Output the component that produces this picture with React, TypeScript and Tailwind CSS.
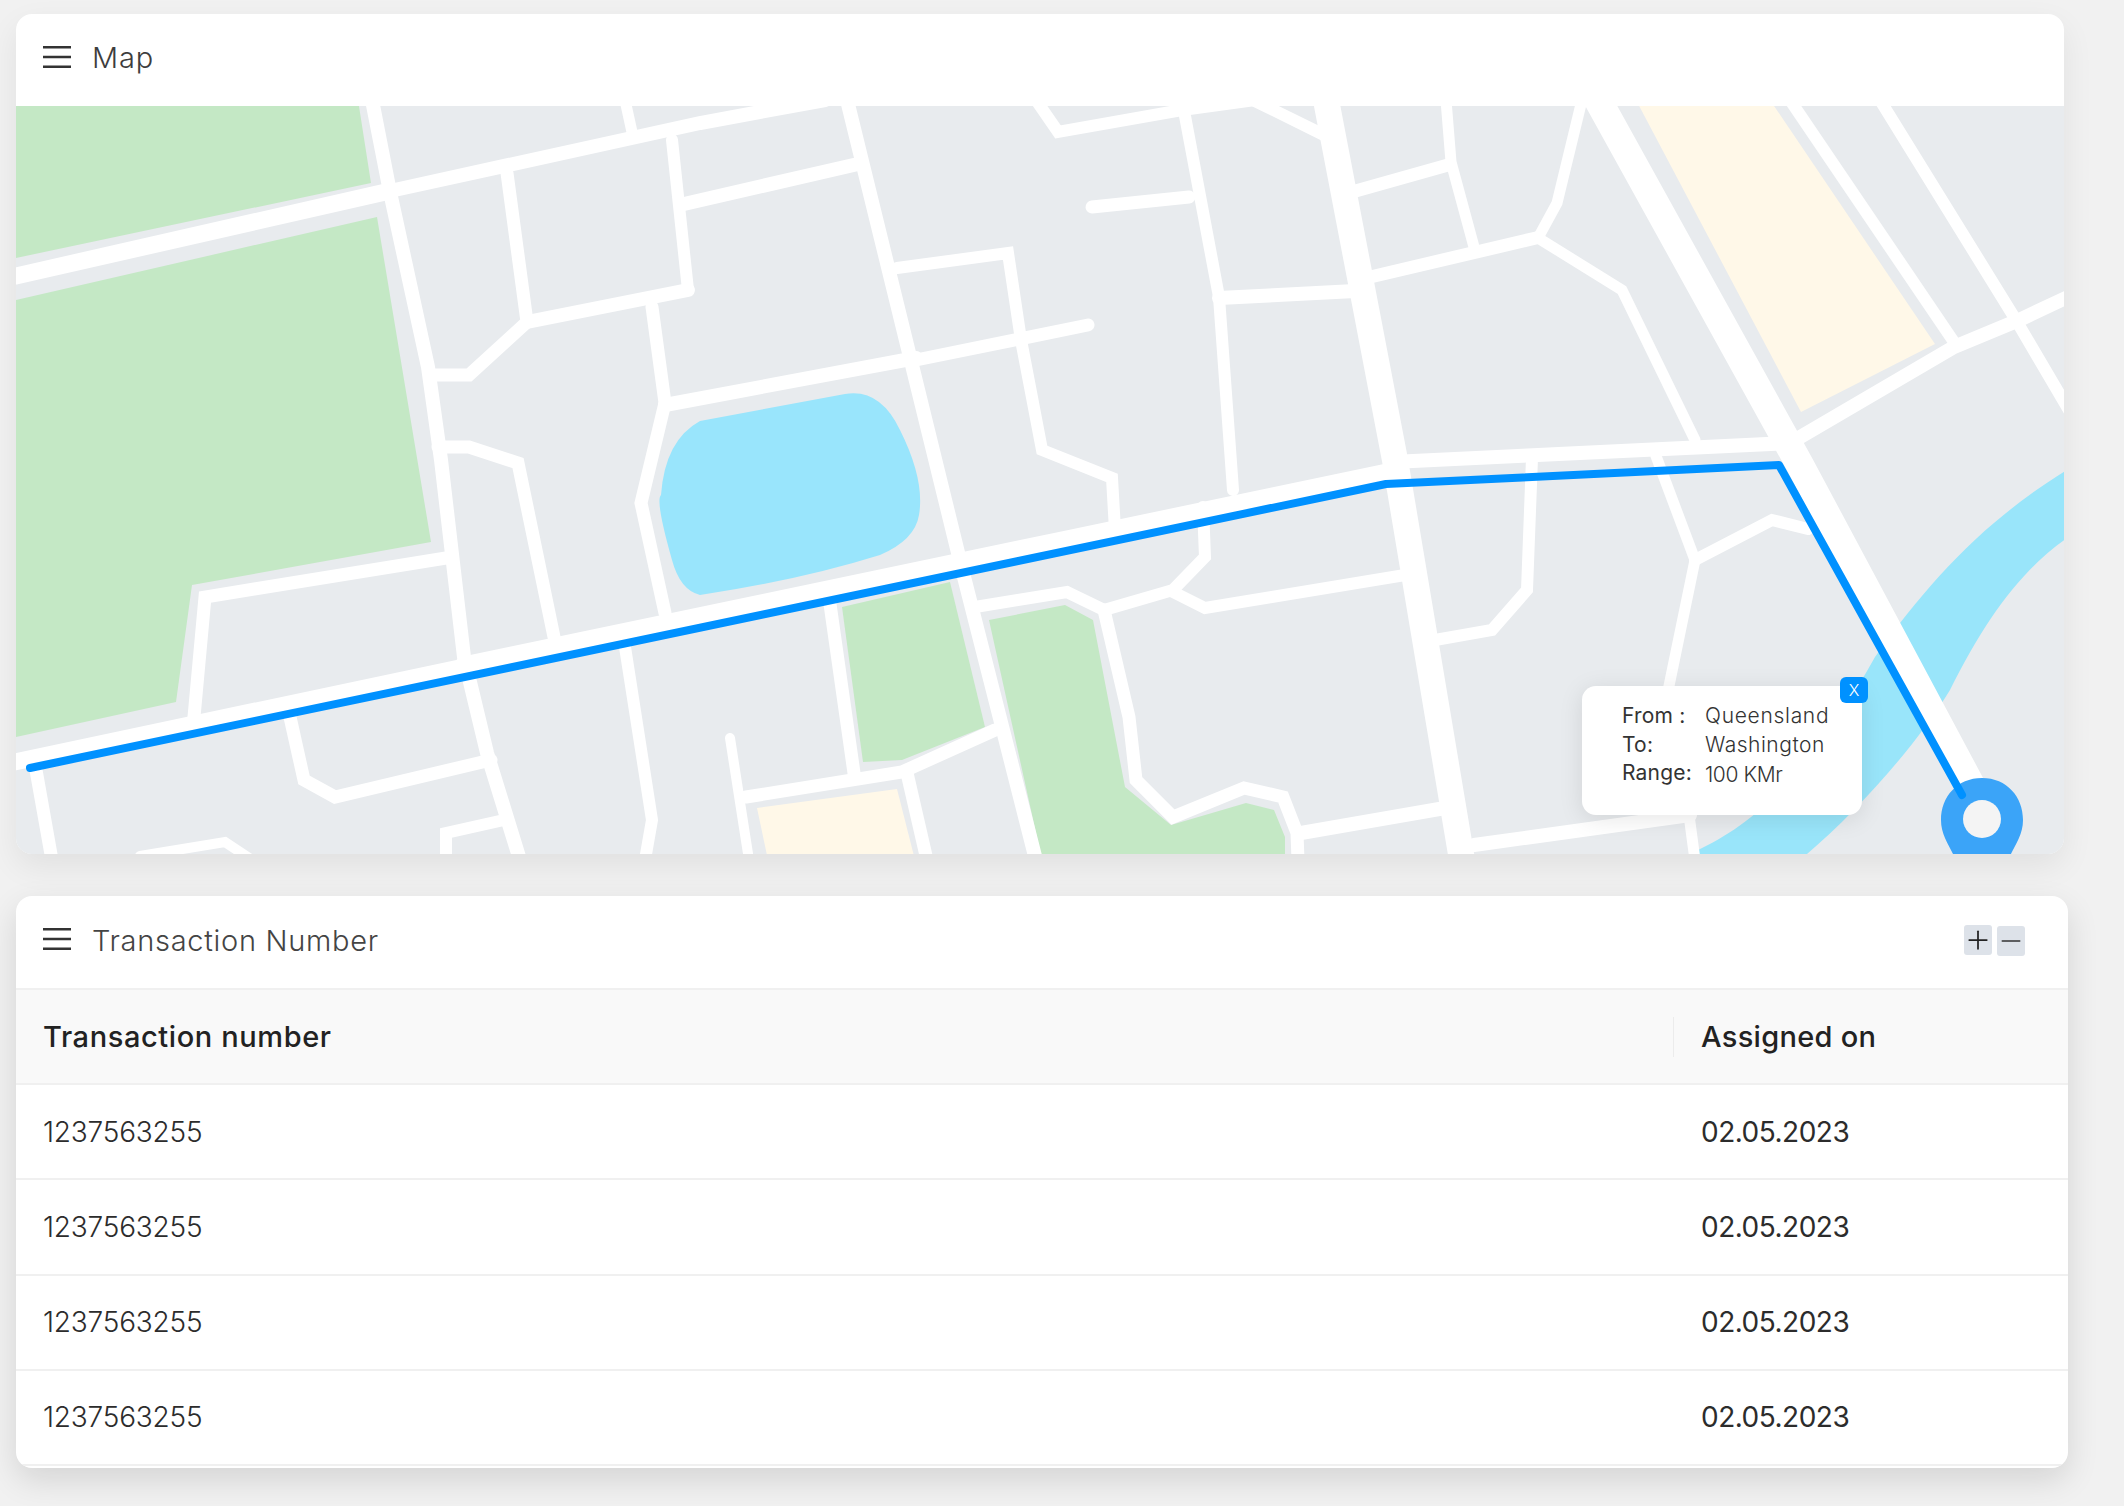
import { Minus, Plus } from 'lucide-react';

const font = "[font-family:Inter,'Noto_Sans',sans-serif]";

// map drawing, in page pixels (the svg viewBox starts at the map's top left corner)
const roads: { d: string; w: number }[] = [
  { d: '16,276 390,191', w: 17 },
  { d: '390,191 700,123 825,100', w: 14 },
  { d: '372,100 390,192 428,367 441,460 464,657 487,753 520,860', w: 14 },
  { d: '10,763 464,667', w: 17 },
  { d: '464,667 1067,541 1392,473', w: 21 },
  { d: '1392,462 1790,443', w: 14 },
  { d: '1326,100 1395,460 1462,860', w: 26 },
  { d: '1598,100 1800,465 1995,830', w: 28 },
  { d: '1790,100 1956,345', w: 12 },
  { d: '1880,100 2016,320 2070,412', w: 12 },
  { d: '1790,443 1954,347 2019,320 2070,296', w: 14 },
  { d: '1446,100 1451,162 1474,247', w: 11 },
  { d: '1352,192 1448,165', w: 13 },
  { d: '1366,278 1536,238', w: 13 },
  { d: '1582,100 1557,203 1538,238 1622,290 1695,440', w: 11 },
  { d: '847,100 962,569 1036,860', w: 14 },
  { d: '684,204 858,164', w: 14 },
  { d: '897,268 1008,253 1021,340 1042,450 1112,478 1115,530', w: 12 },
  { d: '916,360 1088,325', w: 13 },
  { d: '1092,207 1189,197', w: 13 },
  { d: '1182,100 1219,297 1233,490', w: 12 },
  { d: '1036,100 1058,132 1182,110 1255,100', w: 12 },
  { d: '1253,100 1330,138', w: 12 },
  { d: '1219,298 1355,291', w: 14 },
  { d: '507,173 527,322 469,375 431,375', w: 13 },
  { d: '527,322 688,290', w: 14 },
  { d: '672,140 688,290', w: 12 },
  { d: '652,307 665,403 641,503 665,613', w: 13 },
  { d: '665,405 916,358', w: 14 },
  { d: '625,100 632,132', w: 11 },
  { d: '438,447 469,447 518,463 554,637', w: 13 },
  { d: '446,558 205,597 194,717', w: 13 },
  { d: '290,717 304,780 335,797 491,760', w: 13 },
  { d: '504,820 446,833 446,860', w: 12 },
  { d: '36,770 52,860', w: 13 },
  { d: '140,856 225,842 252,860', w: 10 },
  { d: '625,647 652,820 645,860', w: 12 },
  { d: '828,590 854,773', w: 13 },
  { d: '730,738 749,860', w: 10 },
  { d: '746,797 902,772 995,730', w: 13 },
  { d: '907,773 927,860', w: 13 },
  { d: '975,607 1067,592 1104,610 1173,590 1205,557 1203,507', w: 12 },
  { d: '1173,592 1205,608 1405,575', w: 12 },
  { d: '1104,610 1129,717 1136,780 1173,817 1244,788 1283,797 1297,833 1298,860', w: 13 },
  { d: '1301,833 1445,808', w: 14 },
  { d: '1532,458 1527,590 1492,630 1435,640', w: 12 },
  { d: '1656,456 1695,560 1663,715 1672,793', w: 11 },
  { d: '1689,815 1695,860', w: 11 },
  { d: '1695,560 1772,520 1808,529', w: 12 },
  { d: '1474,845 1690,815', w: 14 },
];

const greens = [
  '16,100 358,100 371,183 16,258',
  '16,300 377,217 431,542 192,585 176,702 16,737',
  '842,607 950,582 985,727 902,760 863,762',
  '989,620 1065,605 1093,620 1125,787 1171,825 1246,803 1274,810 1285,837 1285,860 1042,860',
];
const yellows = ['1636,100 1770,100 1935,344 1801,412', '757,808 897,789 915,860 768,860'];

function MapArt() {
  return (
    <svg viewBox="16 106 2048 748" className="block w-full h-full" fill="none">
      <g className="blur-[0.6px]">
        <rect x="0" y="90" width="2124" height="780" fill="#e8ebee" />
        {greens.map((p) => (
          <polygon key={p} points={p} fill="#c4e8c5" />
        ))}
        {yellows.map((p) => (
          <polygon key={p} points={p} fill="#fff8e8" />
        ))}
        <path
          d="M700,421 L845,394 Q880,388 900,430 Q925,480 919,515 Q915,540 880,555 Q800,580 700,595 Q680,590 672,560 Q655,500 661,495 Q665,440 700,421 Z"
          fill="#99e5fc"
        />
        <path
          d="M2070,468 C1985,520 1930,580 1875,657 C1840,720 1800,770 1770,800 C1740,830 1710,845 1677,860 L1800,860 C1860,810 1920,740 1950,690 C1985,620 2020,570 2070,536 Z"
          fill="#99e5fa"
        />
        {roads.map((r) => (
          <polyline key={r.d} points={r.d} stroke="#ffffff" strokeWidth={r.w} strokeLinecap="round" strokeLinejoin="miter" />
        ))}
        <path
          d="M1982,778 C2007,778 2023,797 2023,820 C2023,835 2015,845 2008,860 L1956,860 C1949,845 1941,835 1941,820 C1941,797 1957,778 1982,778 Z"
          fill="#3ba4f8"
        />
        <circle cx="1982" cy="819" r="19" fill="#f4f4f4" />
        <polyline
          points="30,768 1386,484 1779,465 1962,795"
          stroke="#0091ff"
          strokeWidth="8"
          strokeLinecap="round"
          strokeLinejoin="round"
        />
      </g>
    </svg>
  );
}

function Burger() {
  return (
    <svg width="28" height="22" viewBox="0 0 28 22" className="shrink-0">
      <rect y="0" width="28" height="2.5" fill="#333" />
      <rect y="9.75" width="28" height="2.5" fill="#333" />
      <rect y="19.5" width="28" height="2.5" fill="#333" />
    </svg>
  );
}

function Popup() {
  return (
    <div className="absolute left-[1566px] top-[580px] w-[280px] h-[129px] bg-white rounded-[14px] shadow-[0_4px_24px_rgba(0,0,0,0.10)] pl-[40px] pt-[16px] text-[21px] leading-[28.5px] text-[#333] font-light">
      <div className="grid grid-cols-[83px_auto]">
        <span className="font-normal tracking-[0.2px]">From :</span>
        <span className="tracking-[0.7px]">Queensland</span>
        <span className="font-normal tracking-[0.2px]">To:</span>
        <span className="tracking-[0.5px]">Washington</span>
        <span className="font-normal tracking-[0.2px]">Range:</span>
        <span className="pt-[2px] tracking-[-0.4px]">100 KMr</span>
      </div>
      <span className="absolute -right-[6px] -top-[9px] w-[28px] h-[26px] rounded-[6px] bg-[#0091ff] text-white flex items-center justify-center text-[16px] font-light leading-none">
        X
      </span>
    </div>
  );
}

const rows = ['1237563255', '1237563255', '1237563255', '1237563255'];

export default function App() {
  return (
    <div className={`min-h-screen bg-[#f1f1f1] pt-[14px] pl-[16px] ${font}`}>
      <section className="w-[2048px] rounded-[16px] bg-white overflow-hidden shadow-[0_12px_32px_rgba(0,0,0,0.07)]">
        <header className="h-[92px] flex items-center gap-[21px] pl-[27px] pb-[6px]">
          <Burger />
          <h2 className="text-[29px] font-light text-[#3d3d3d] tracking-[0.9px] mt-[2px]">Map</h2>
        </header>
        <div className="relative h-[748px]">
          <MapArt />
          <Popup />
        </div>
      </section>

      <section className="mt-[42px] w-[2052px] rounded-[16px] bg-white overflow-hidden shadow-[0_12px_32px_rgba(0,0,0,0.12)]">
        <header className="h-[94px] flex items-center pl-[27px] pr-[43px] pb-[6px] border-b-2 border-[#f0f0f0]">
          <Burger />
          <h2 className="ml-[21px] text-[29px] font-light text-[#444] tracking-[0.7px] mt-[3px]">Transaction Number</h2>
          <div className="ml-auto flex gap-[5px] mt-[3px]">
            <button className="w-[28px] h-[30px] rounded-[3px] bg-[#dde2e9] flex items-center justify-center text-[#222]">
              <Plus size={30} strokeWidth={1.4} className="shrink-0" />
            </button>
            <button className="w-[28px] h-[30px] rounded-[3px] bg-[#dde2e9] flex items-center justify-center text-[#333] mt-[1px]">
              <Minus size={30} strokeWidth={1.2} className="shrink-0" />
            </button>
          </div>
        </header>
        <div className="grid grid-cols-[1658px_1fr] h-[95px] items-center bg-[#f9f9f9] border-b-2 border-[#f0f0f0] text-[29px] font-medium text-[#222]">
          <div className="pl-[27px] h-[40px] flex items-center border-r border-[#ececec] tracking-[0.6px]">Transaction number</div>
          <div className="pl-[27px] tracking-[0.3px]">Assigned on</div>
        </div>
        {rows.map((n, i) => (
          <div
            key={i}
            className="grid grid-cols-[1658px_1fr] h-[95.25px] items-center border-b-2 border-[#f0f0f0] text-[28px] font-light text-[#2c2c2c] tracking-[-0.2px]"
          >
            <div className="pl-[27px]">{n}</div>
            <div className="pl-[27px] font-normal tracking-[-0.5px]">02.05.2023</div>
          </div>
        ))}
        <div className="h-[2px]" />
      </section>
    </div>
  );
}
